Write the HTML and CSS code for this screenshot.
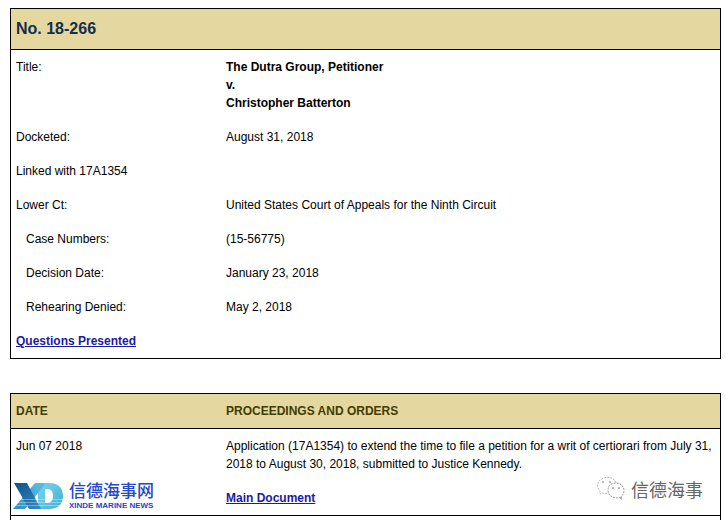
FILE: index.html
```html
<!DOCTYPE html>
<html lang="en">
<head>
    <meta charset="UTF-8">
    <title>No. 18-266</title>
    <link rel="stylesheet" href="styles.css">
</head>
<body>

<table class="docket">
    <thead>
        <tr><th class="docket_no" colspan="2">No. 18-266</th></tr>
    </thead>
    <tbody>
        <tr>
            <td class="label">Title:</td>
            <td class="title">The Dutra Group, Petitioner<br>v.<br>Christopher Batterton</td>
        </tr>
        <tr>
            <td class="label">Docketed:</td>
            <td>August 31, 2018</td>
        </tr>
        <tr>
            <td colspan="2">Linked with 17A1354</td>
        </tr>
        <tr>
            <td class="label">Lower Ct:</td>
            <td>United States Court of Appeals for the Ninth Circuit</td>
        </tr>
        <tr>
            <td class="label sub">Case Numbers:</td>
            <td>(15-56775)</td>
        </tr>
        <tr>
            <td class="label sub">Decision Date:</td>
            <td>January 23, 2018</td>
        </tr>
        <tr>
            <td class="label sub">Rehearing Denied:</td>
            <td>May 2, 2018</td>
        </tr>
        <tr>
            <td colspan="2"><a href="#">Questions Presented</a></td>
        </tr>
    </tbody>
</table>

<div class="proceedings_wrap">
    <table class="docket proceedings">
        <thead>
            <tr>
                <th>DATE</th>
                <th>PROCEEDINGS AND ORDERS</th>
            </tr>
        </thead>
        <tbody>
            <tr>
                <td class="label">Jun 07 2018</td>
                <td>
                    <p>Application (17A1354) to extend the time to file a petition for a writ of certiorari from July 31, 2018 to August 30, 2018, submitted to Justice Kennedy.</p>
                    <a href="#">Main Document</a>
                </td>
            </tr>
        </tbody>
    </table>

    <div class="brand">
        <svg class="brand_icon" width="50" height="28" viewBox="0 0 50 28" aria-hidden="true">
            <defs>
                <linearGradient id="x_dark" x1="0" y1="0" x2="1" y2="1">
                    <stop offset="0" stop-color="#14508a"/>
                    <stop offset="1" stop-color="#2f8fc4"/>
                </linearGradient>
                <linearGradient id="x_light" x1="1" y1="0" x2="0" y2="1">
                    <stop offset="0" stop-color="#5cc0e2"/>
                    <stop offset="1" stop-color="#2f8fc8"/>
                </linearGradient>
                <linearGradient id="d_fill" x1="0" y1="0" x2="1" y2="1">
                    <stop offset="0" stop-color="#7bd8ee"/>
                    <stop offset="1" stop-color="#3fadd8"/>
                </linearGradient>
            </defs>
            <path fill-rule="evenodd" d="M24 1H37C45 1 50 6 50 14S45 27 36 27H25V1ZM32 7V21H34C38 21 40 18 40 14S38 7 35 7Z" fill="url(#d_fill)"/>
            <path d="M22 1H33L12 27H0Z" fill="url(#x_light)"/>
            <path d="M1 1H14L28 27H16Z" fill="url(#x_dark)"/>
            <path d="M0 17.500H50M0 20.500H50M0 23.500H50" stroke="#fff" stroke-opacity=".35"/>
        </svg>
        <div class="brand_text">
            <div class="brand_name" lang="zh">信德海事网</div>
            <div class="brand_en">XINDE MARINE NEWS</div>
        </div>
    </div>

    <div class="account">
        <svg width="28" height="24" viewBox="0 0 28 24" fill="none" stroke="#999" stroke-dasharray="2 1" aria-hidden="true">
            <path d="M10 16C8 17 6 16 5 16L3 17L3 14C-1 10 0 3 7 1C13-1 18 2 19 6" stroke-opacity=".7"/>
            <path d="M24 20C20 22 11 21 11 13C11 8 15 6 19 6C24 6 27 10 27 13C27 16 26 18 24 20L25 22L22 21"/>
            <path d="M5 5H7M12 5H14M15 11H17M21 11H23" stroke="#777"/>
        </svg>
        <span lang="zh">信德海事</span>
    </div>
</div>

</body>
</html>
```
FILE: styles.css
```css
*{
    margin: 0;
    padding: 0;
    box-sizing: border-box;
}
body{
    padding: 8px 5px 0 10px;
    background: #fff;
    color: #000;
    font: 12px/18px "Liberation Sans", Arial, sans-serif;
}
a{
    color: #1a1aa6;
    font-weight: bold;
}
.docket{
    width: 100%;
    border: 1px solid #000;
    border-spacing: 0;
}
.docket th,
.docket td{
    padding: 8px 5px;
    text-align: left;
    vertical-align: top;
}
.docket th{
    background: #e5d7a0;
    border-bottom: 1px solid #000;
    color: #423c00;
}
.docket .docket_no{
    padding: 11px 5px;
    color: #12304a;
    font-size: 16px;
}
.docket .label{
    width: 210px;
}
.docket .sub{
    padding-left: 15px;
}
.docket .title{
    font-weight: bold;
}
.proceedings_wrap{
    position: relative;
    margin-top: 34px;
    padding-bottom: 4px;
    border: solid #000;
    border-width: 0 1px;
}
.proceedings{
    border-width: 1px 0;
}
.proceedings p{
    margin-bottom: 16px;
}

/* marks laid over the last row */
.brand{
    position: absolute;
    left: 2px;
    bottom: 10px;
    display: flex;
    align-items: flex-end;
    gap: 6px;
    color: #2348c8;
}
.brand_name{
    font: 500 17px/24px "Noto Sans CJK SC", sans-serif;
}
.brand_en{
    font-size: 8px;
    line-height: 8px;
    font-weight: bold;
}
.account{
    position: absolute;
    right: 17px;
    bottom: 19px;
    display: flex;
    align-items: center;
    gap: 6px;
    color: #666;
    font: 18px/24px "Noto Sans CJK SC", sans-serif;
}
```
